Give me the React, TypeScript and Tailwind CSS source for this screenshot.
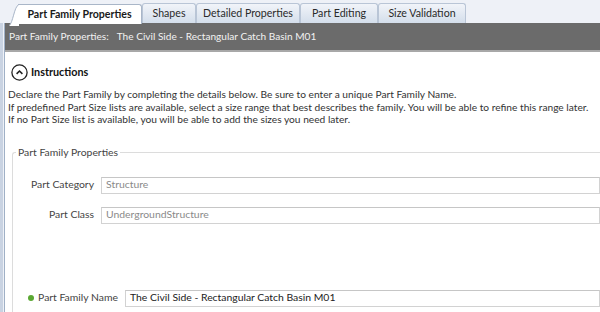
import React from "react";

const font = { fontFamily: 'Lato, "Liberation Sans", sans-serif' };

function Tab({ label, active, w }: { label: string; active?: boolean; w: string }) {
  return (
    <div
      className={`relative flex h-[20px] items-center justify-center whitespace-nowrap text-[10.6px] ${w} ${
        active
          ? "z-10 -mb-px rounded-tr-[3px] border-r border-t border-[#a9b6c8] bg-white font-bold text-[#1a1a1a]"
          : "mt-[1px] rounded-t-[3px] border border-b-0 border-[#b9c5d6] bg-gradient-to-b from-[#f1f4f9] to-[#d4deeb] text-[#2a2a2a]"
      }`}
    >
      {active && (
        <svg className="absolute -left-[9px] top-[-1px]" width="10" height="22" viewBox="0 0 10 22">
          <path d="M0 22 C4 20 5 3 10 1 L10 22 Z" fill="#ffffff" />
          <path d="M0 21.5 C4 19.5 5 3 9.5 0.8 L10 0.5" fill="none" stroke="#a9b6c8" strokeWidth="1" />
        </svg>
      )}
      {label}
    </div>
  );
}

function Field({ label, value, muted, dot }: { label: string; value: string; muted?: boolean; dot?: boolean }) {
  return (
    <div className="flex items-center">
      <div
        className="flex items-center justify-end whitespace-nowrap text-[10.4px] text-[#444]"
        style={{ width: dot ? 105 : 81 }}
      >
        {dot && <span className="mr-[4px] h-[6px] w-[6px] rounded-full bg-[#5aa832]" />}
        <span>{label}</span>
      </div>
      <div
        className={`ml-[7px] flex h-[17px] flex-1 items-center whitespace-nowrap border border-[#d2d2d2] border-t-[#c6c6c6] px-[4px] text-[10.4px] ${
          muted ? "text-[#8a8a8a]" : "text-[#222]"
        }`}
      >
        {value}
      </div>
    </div>
  );
}

export default function App() {
  return (
    <div className="h-[312px] w-[600px] overflow-hidden bg-[#eef1f7]" style={font}>
      {/* tabs */}
      <div className="flex h-[23px] items-end pl-[18px]">
        <Tab label="Part Family Properties" active w="w-[124px]" />
        <Tab label="Shapes" w="w-[54px]" />
        <Tab label="Detailed Properties" w="w-[104px]" />
        <Tab label="Part Editing" w="w-[78px]" />
        <Tab label="Size Validation" w="w-[88px]" />
      </div>
      <div className="flex h-[289px] border-l-[3px] border-l-[#c9d3e2] pl-[1px]">
        <div className="flex flex-1 flex-col border-l border-l-[#9fb0c6] bg-white">
          {/* header bar */}
          <div className="flex h-[29px] items-center whitespace-nowrap border-b-2 border-[#a8a8a8] bg-[#6b6b6b] pl-[4px] text-[10.1px] text-[#f2f2f2]">
            <span>Part Family Properties:</span>
            <span className="ml-[8px]">The Civil Side - Rectangular Catch Basin M01</span>
          </div>
          {/* instructions */}
          <div className="ml-[6px] mt-[12px] flex items-center">
            <svg width="17" height="17" viewBox="0 0 17 17">
              <circle cx="8.5" cy="8.5" r="7.6" fill="none" stroke="#222" strokeWidth="1.3" />
              <path d="M5.6 9.8 L8.5 7 L11.4 9.8" fill="none" stroke="#222" strokeWidth="1.6" />
            </svg>
            <span className="ml-[3px] text-[10.8px] font-bold text-[#111]">Instructions</span>
          </div>
          <div className="ml-[3px] mt-[7px] whitespace-nowrap text-[10.2px] leading-[12.5px] text-[#333]">
            <div>Declare the Part Family by completing the details below. Be sure to enter a unique Part Family Name.</div>
            <div>If predefined Part Size lists are available, select a size range that best describes the family. You will be able to refine this range later.</div>
            <div>If no Part Size list is available, you will be able to add the sizes you need later.</div>
          </div>
          {/* group box */}
          <div className="relative ml-[7px] mt-[26px] flex-1 rounded-tl-[3px] border-l border-t border-[#dcdcdc]">
            <span className="absolute -top-[8px] left-[3px] whitespace-nowrap bg-white px-[2px] text-[10.4px] text-[#444]">
              Part Family Properties
            </span>
            <div className="mt-[24px] flex flex-col gap-[13px]">
              <Field label="Part Category" value="Structure" muted />
              <Field label="Part Class" value="UndergroundStructure" muted />
            </div>
            <div className="mt-[66px]">
              <Field label="Part Family Name" value="The Civil Side - Rectangular Catch Basin M01" dot />
            </div>
          </div>
        </div>
      </div>
    </div>
  );
}
